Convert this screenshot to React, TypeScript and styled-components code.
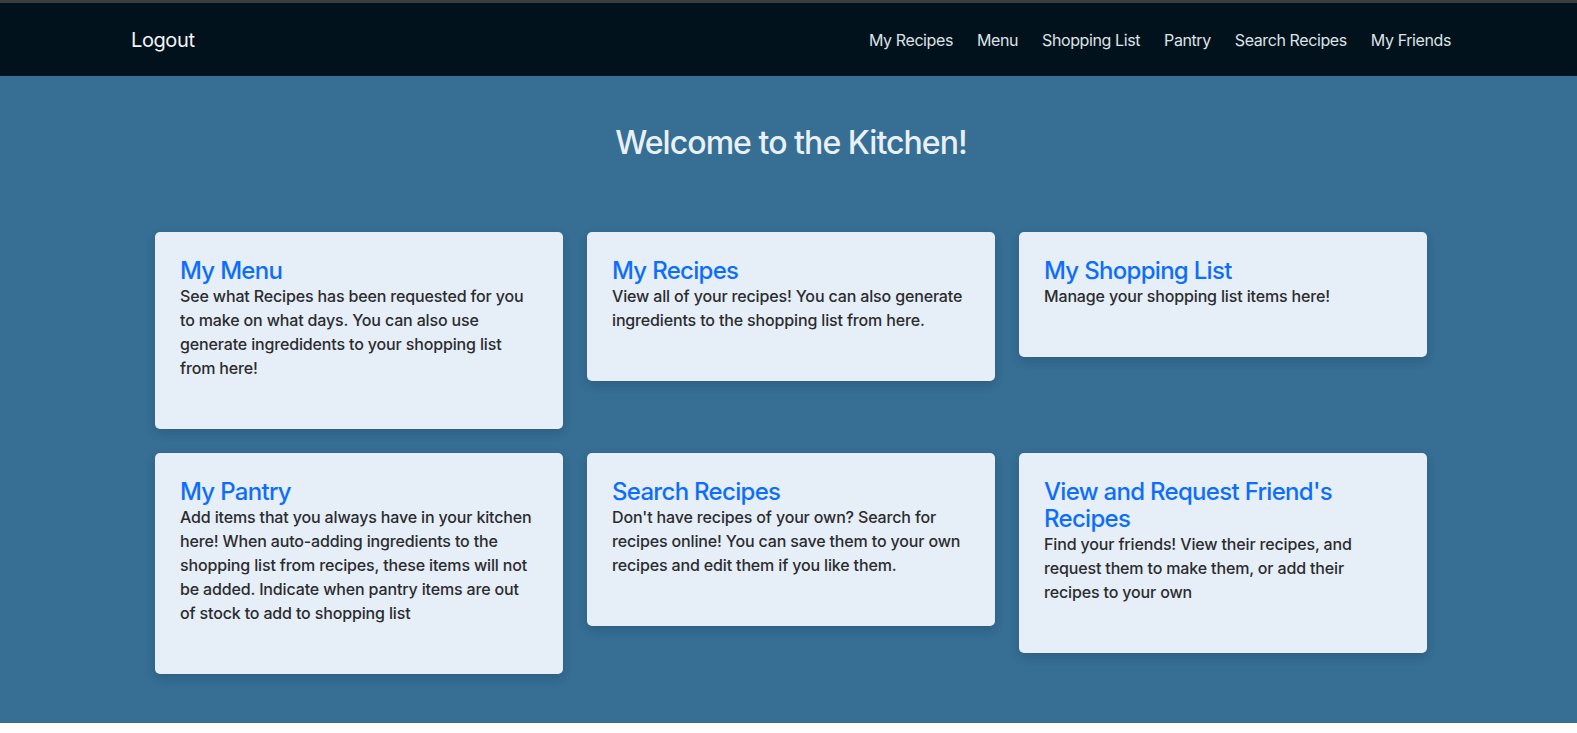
import React from "react";
import styled, { createGlobalStyle } from "styled-components";

const GlobalStyle = createGlobalStyle`
  html, body {
    margin: 0;
    padding: 0;
    background: #ffffff;
    font-family: Inter, "Noto Sans", "Liberation Sans", sans-serif;
    -webkit-font-smoothing: antialiased;
  }
  * { box-sizing: border-box; }
`;

const TopStrip = styled.div`
  height: 3px;
  background: #3b3d3f;
`;

const NavBar = styled.nav`
  height: 73px;
  background: #02121d;
  padding-left: 5px;
  display: flex;
  justify-content: center;
`;

const NavInner = styled.div`
  width: 1320px;
  display: flex;
  align-items: center;
  justify-content: space-between;
`;

const Brand = styled.a`
  color: #f3f5f7;
  font-size: 20px;
  font-weight: 400;
  text-decoration: none;
  letter-spacing: -0.4px;
`;

const NavLinks = styled.div`
  display: flex;
  align-items: center;
  gap: 24px;
`;

const NavLink = styled.a`
  color: #dde2e7;
  font-size: 16px;
  font-weight: 400;
  text-decoration: none;
  letter-spacing: -0.4px;
`;

const Main = styled.main`
  background: #366e94;
  padding: 48px 0 49px 5px;
  display: flex;
  flex-direction: column;
  align-items: center;
`;

const Title = styled.h2`
  margin: 0 0 70px;
  font-size: 32px;
  line-height: 38px;
  font-weight: 500;
  color: #e8f0f8;
  letter-spacing: -0.95px;
`;

const Grid = styled.div`
  width: 1272px;
  display: grid;
  grid-template-columns: repeat(3, 408px);
  column-gap: 24px;
  row-gap: 24px;
  align-items: start;
`;

const Card = styled.div`
  background: #e6eef8;
  border-radius: 5px;
  padding: 25px 25px 49px;
  box-shadow: 0 4px 10px rgba(10, 30, 50, 0.18);
`;

const CardTitle = styled.h3`
  margin: 0;
  font-size: 24px;
  line-height: 27px;
  font-weight: 500;
  color: #0d6efd;
  letter-spacing: -0.7px;
`;

const CardText = styled.p`
  margin: 0;
  font-size: 16px;
  line-height: 24px;
  font-weight: 500;
  color: #2b2c2e;
  letter-spacing: -0.15px;
`;

const cards = [
  {
    title: "My Menu",
    text: "See what Recipes has been requested for you to make on what days. You can also use generate ingredidents to your shopping list from here!",
  },
  {
    title: "My Recipes",
    text: "View all of your recipes! You can also generate ingredients to the shopping list from here.",
  },
  {
    title: "My Shopping List",
    text: "Manage your shopping list items here!",
  },
  {
    title: "My Pantry",
    text: "Add items that you always have in your kitchen here! When auto-adding ingredients to the shopping list from recipes, these items will not be added. Indicate when pantry items are out of stock to add to shopping list",
  },
  {
    title: "Search Recipes",
    text: "Don't have recipes of your own? Search for recipes online! You can save them to your own recipes and edit them if you like them.",
  },
  {
    title: "View and Request Friend's Recipes",
    text: "Find your friends! View their recipes, and request them to make them, or add their recipes to your own",
  },
];

const links = ["My Recipes", "Menu", "Shopping List", "Pantry", "Search Recipes", "My Friends"];

export default function App() {
  return (
    <>
      <GlobalStyle />
      <TopStrip />
      <NavBar>
        <NavInner>
          <Brand href="#">Logout</Brand>
          <NavLinks>
            {links.map((l) => (
              <NavLink key={l} href="#">
                {l}
              </NavLink>
            ))}
          </NavLinks>
        </NavInner>
      </NavBar>
      <Main>
        <Title>Welcome to the Kitchen!</Title>
        <Grid>
          {cards.map((c) => (
            <Card key={c.title}>
              <CardTitle>{c.title}</CardTitle>
              <CardText>{c.text}</CardText>
            </Card>
          ))}
        </Grid>
      </Main>
    </>
  );
}
